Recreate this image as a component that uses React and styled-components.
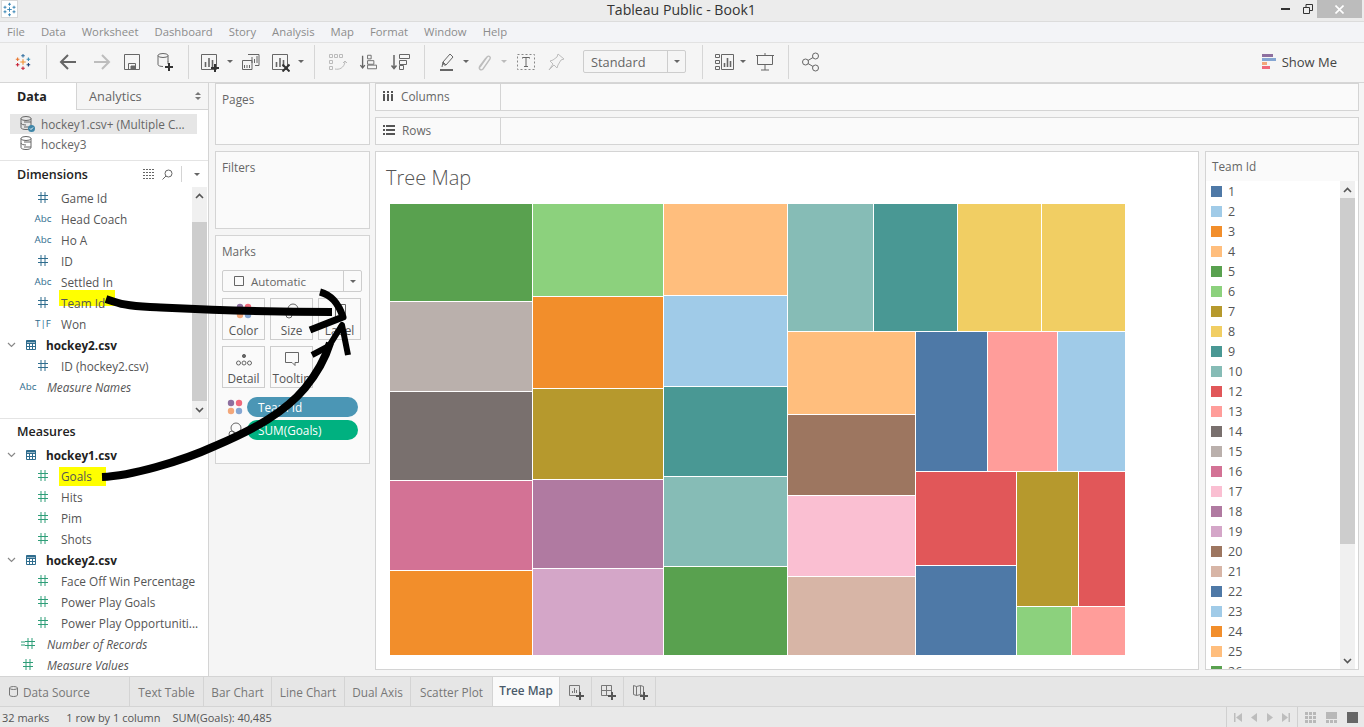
import React from "react";
import styled, { createGlobalStyle } from "styled-components";

const FONT = `"Open Sans", "Noto Sans", "Liberation Sans", sans-serif`;

const COLORS = {
  1: "#4e79a7", 2: "#a0cbe8", 3: "#f28e2b", 4: "#ffbe7d", 5: "#59a14f", 6: "#8cd17d",
  7: "#b6992d", 8: "#f1ce63", 9: "#499894", 10: "#86bcb6", 12: "#e15759", 13: "#ff9d9a",
  14: "#79706e", 15: "#bab0ac", 16: "#d37295", 17: "#fabfd2", 18: "#b07aa1", 19: "#d4a6c8",
  20: "#9d7660", 21: "#d7b5a6", 22: "#4e79a7", 23: "#a0cbe8", 24: "#f28e2b", 25: "#ffbe7d", 26: "#59a14f",
};

// x0, y0, x1, y1 (inclusive), legend key
const TREE = [
  [390, 204, 532, 301, 5], [390, 302, 532, 391, 15], [390, 392, 532, 480, 14], [390, 481, 532, 570, 16], [390, 571, 532, 655, 3],
  [533, 204, 663, 296, 6], [533, 297, 663, 388, 3], [533, 389, 663, 479, 7], [533, 480, 663, 568, 18], [533, 569, 663, 655, 19],
  [664, 204, 787, 295, 4], [664, 296, 787, 386, 2], [664, 387, 787, 476, 9], [664, 477, 787, 566, 10], [664, 567, 787, 655, 5],
  [788, 204, 873, 331, 10], [874, 204, 957, 331, 9], [958, 204, 1041, 331, 8], [1042, 204, 1125, 331, 8],
  [788, 332, 915, 414, 4], [788, 415, 915, 495, 20], [788, 496, 915, 576, 17], [788, 577, 915, 655, 21],
  [916, 332, 987, 471, 1], [988, 332, 1057, 471, 13], [1058, 332, 1125, 471, 2],
  [916, 472, 1016, 565, 12], [916, 566, 1016, 655, 1],
  [1017, 472, 1078, 606, 7], [1079, 472, 1125, 606, 12], [1017, 607, 1071, 655, 6], [1072, 607, 1125, 655, 13],
];

const LEGEND = [1, 2, 3, 4, 5, 6, 7, 8, 9, 10, 12, 13, 14, 15, 16, 17, 18, 19, 20, 21, 22, 23, 24, 25, 26];
const MENUS = ["File", "Data", "Worksheet", "Dashboard", "Story", "Analysis", "Map", "Format", "Window", "Help"];

const Global = createGlobalStyle`
  html, body { margin: 0; padding: 0; background: #f5f5f5; overflow: hidden; }
  * { box-sizing: border-box; }
`;

const Page = styled.div`
  position: relative;
  width: 1364px;
  height: 727px;
  overflow: hidden;
  display: flex;
  flex-direction: column;
  font-family: ${FONT};
  font-size: 11.8px;
  color: #555;
  background: #f5f5f5;
`;

const TitleBar = styled.div`
  position: relative;
  height: 22px;
  flex: none;
  display: flex;
  justify-content: center;
  align-items: center;
  background: #ececec;
  border-bottom: 1px solid #dcdcdc;
  font-size: 14.1px;
  color: #333;
  padding-bottom: 3px;
  padding-right: 1px;
`;
const AppIcon = styled.div`
  position: absolute;
  left: 1px;
  top: 0;
  width: 17px;
  height: 18px;
  background: #fff;
  border: 1px solid #d8d8d8;
  display: flex;
  align-items: center;
  justify-content: center;
`;
const WinControls = styled.div`
  position: absolute;
  right: 2px;
  top: 0;
  display: flex;
  height: 18px;
`;
const WinBtn = styled.div`
  width: ${(p) => p.$w}px;
  display: flex;
  align-items: center;
  justify-content: center;
  background: ${(p) => p.$bg || "transparent"};
`;

const MenuBar = styled.div`
  height: 21px;
  flex: none;
  display: flex;
  align-items: center;
  gap: 16px;
  padding: 0 0 2px 7px;
  background: #f3f4f7;
  border-bottom: 1px solid #e2e2e2;
  color: #8c8c8c;
  font-size: 11.3px;
`;

const Toolbar = styled.div`
  height: 40px;
  flex: none;
  display: flex;
  align-items: center;
  background: #f5f5f5;
  border-bottom: 1px solid #d6d6d6;
  padding: 0 27px 2px 0;
`;
const Tool = styled.div`
  flex: none;
  width: ${(p) => p.$w}px;
  margin-left: ${(p) => p.$ml || 0}px;
  display: flex;
  justify-content: center;
  align-items: center;
`;
const ToolSep = styled.div`
  flex: none;
  width: 1px;
  height: 34px;
  background: #d6d6d6;
  margin-left: ${(p) => p.$ml || 0}px;
`;
const Caret = styled.div`
  flex: none;
  width: 0;
  height: 0;
  border-left: 3px solid transparent;
  border-right: 3px solid transparent;
  border-top: 3px solid ${(p) => p.$color || "#666"};
`;
const Dropdown = styled.div`
  flex: none;
  display: flex;
  align-items: stretch;
  width: ${(p) => p.$w}px;
  height: ${(p) => p.$h}px;
  margin-left: ${(p) => p.$ml || 0}px;
  border: 1px solid #cdcdcd;
  border-radius: 2px;
  background: ${(p) => p.$bg || "#f5f5f5"};
`;
const DropLabel = styled.div`
  flex: 1;
  display: flex;
  align-items: center;
  gap: 7px;
  padding-left: ${(p) => p.$pl}px;
  color: #666;
  font-size: ${(p) => p.$fs || 12}px;
`;
const DropBtn = styled.div`
  flex: none;
  width: 18px;
  border-left: 1px solid #cdcdcd;
  display: flex;
  align-items: center;
  justify-content: center;
`;
const ShowMe = styled.div`
  margin-left: auto;
  display: flex;
  align-items: center;
  gap: 6px;
  color: #444;
  font-size: 13px;
`;

const Body = styled.div`
  height: 593px;
  flex: none;
  display: flex;
`;

const LeftPanel = styled.div`
  flex: none;
  width: 209px;
  background: #fff;
  border-right: 1px solid #d4d4d4;
  display: flex;
  flex-direction: column;
`;
const TabRow = styled.div`
  height: 27px;
  flex: none;
  display: flex;
`;
const DataTab = styled.div`
  width: 76px;
  padding-left: 17px;
  display: flex;
  align-items: center;
  font-weight: 700;
  font-size: 12.5px;
  color: #222;
`;
const AnalyticsTab = styled.div`
  flex: 1;
  display: flex;
  align-items: center;
  justify-content: space-between;
  padding: 0 7px 0 12px;
  background: #f5f5f5;
  border-left: 1px solid #d4d4d4;
  border-bottom: 1px solid #d4d4d4;
  font-size: 12.8px;
  color: #666;
`;
const Updown = styled.div`
  display: flex;
  flex-direction: column;
  gap: 2px;
`;
const CaretUp = styled(Caret)`
  border-top: 0;
  border-bottom: 3px solid #777;
`;
const Sources = styled.div`
  height: 51px;
  flex: none;
  padding-top: 4px;
  border-bottom: 1px solid #e4e4e4;
`;
const SourceRow = styled.div`
  height: 20px;
  margin: 0 11px 0 10px;
  padding-left: 8px;
  display: flex;
  align-items: center;
  gap: 5px;
  color: #666;
  background: ${(p) => (p.$active ? "#e6e6e6" : "transparent")};
`;
const SectionHead = styled.div`
  height: ${(p) => p.$h}px;
  flex: none;
  display: flex;
  align-items: center;
  padding-left: 17px;
  font-weight: 600;
  font-size: 12.5px;
  color: #222;
`;
const HeadTools = styled.div`
  margin-left: auto;
  display: flex;
  align-items: center;
  height: 16px;
  gap: 7px;
  padding-right: 8px;
`;
const HeadSep = styled.div`
  width: 1px;
  height: 16px;
  background: #d4d4d4;
  margin-left: 1px;
  margin-right: 5px;
`;
const DimArea = styled.div`
  height: 232px;
  flex: none;
  display: flex;
  border-bottom: 1px solid #e4e4e4;
`;
const DimList = styled.div`
  flex: 1;
  min-width: 0;
`;
const Scroll = styled.div`
  flex: none;
  width: 15px;
  margin-right: ${(p) => p.$mr}px;
  background: #f0f0f0;
  display: flex;
  flex-direction: column;
`;
const ScrollArrow = styled.div`
  flex: none;
  height: 17px;
  display: flex;
  align-items: center;
  justify-content: center;
`;
const ScrollTrack = styled.div`
  flex: 1;
`;
const Thumb = styled.div`
  flex: none;
  height: ${(p) => p.$h}px;
  margin-top: ${(p) => p.$mt}px;
  background: #cdcdcd;
`;
const Row = styled.div`
  height: 21px;
  flex: none;
  display: flex;
  align-items: center;
  white-space: nowrap;
  padding-left: ${(p) => (p.$italic ? 17 : 32)}px;
  gap: ${(p) => (p.$italic ? 8 : 7)}px;
  color: #555;
  font-style: ${(p) => (p.$italic ? "italic" : "normal")};
`;
const FieldIcon = styled.div`
  flex: none;
  width: 22px;
  display: flex;
  justify-content: center;
  align-items: center;
  font-style: normal;
  font-size: 9.8px;
  font-weight: 500;
  color: ${(p) => p.$color};
`;
// yellow highlighter stroke painted under the label
const Marker = styled.span`
  position: relative;
  z-index: 0;
  &::before {
    content: "";
    display: ${(p) => (p.$mark ? "block" : "none")};
    position: absolute;
    z-index: -1;
    left: -2px;
    top: ${(p) => p.$mark?.top}px;
    width: ${(p) => p.$mark?.w}px;
    height: ${(p) => p.$mark?.h}px;
    background: #ffff00;
  }
`;
const TableRow = styled.div`
  height: 21px;
  flex: none;
  display: flex;
  align-items: center;
  padding-left: 7px;
  font-weight: 700;
  color: #222;
`;
const Chevron = styled.div`
  width: 9px;
  display: flex;
`;
const TableIconWrap = styled.div`
  width: 30px;
  display: flex;
  justify-content: center;
`;

const Workspace = styled.div`
  flex: 1;
  min-width: 0;
  display: flex;
  gap: 5px;
  padding: 0 5px 6px 6px;
`;
const SideCol = styled.div`
  flex: none;
  width: 155px;
  display: flex;
  flex-direction: column;
  gap: 6px;
`;
const Card = styled.div`
  background: #fafafa;
  border: 1px solid #d4d4d4;
  height: ${(p) => p.$h}px;
  flex: none;
`;
const CardTitle = styled.div`
  padding: 7px 0 0 6px;
  color: #666;
`;
const MarkBody = styled.div`
  padding: 11px 6px 0 6px;
  display: flex;
  flex-direction: column;
`;
const MarkGrid = styled.div`
  display: grid;
  grid-template-columns: 43px 43px 43px;
  gap: 6px 5px;
  margin-top: 6px;
`;
const MarkBtn = styled.div`
  height: 42px;
  border: 1px solid #cdcdcd;
  display: flex;
  flex-direction: column;
  align-items: center;
  justify-content: flex-end;
  gap: 3px;
  padding-bottom: 1px;
  color: #555;
`;
const PillRow = styled.div`
  display: flex;
  align-items: center;
  height: 20px;
  margin-top: ${(p) => p.$mt}px;
`;
const PillIcon = styled.div`
  flex: none;
  width: 25px;
  display: flex;
  justify-content: center;
`;
const Pill = styled.div`
  width: 111px;
  height: 20px;
  border-radius: 10px;
  display: flex;
  align-items: center;
  padding-left: 11px;
  color: #fff;
  background: ${(p) => p.$bg};
`;

const MainCol = styled.div`
  flex: 1;
  min-width: 0;
  display: flex;
  flex-direction: column;
  gap: 6px;
`;
const Shelf = styled.div`
  height: 28px;
  flex: none;
  display: flex;
  background: #fafafa;
  border: 1px solid #d4d4d4;
`;
const ShelfLabel = styled.div`
  width: 125px;
  flex: none;
  display: flex;
  align-items: center;
  gap: 7px;
  padding: 0 0 2px 7px;
  border-right: 1px solid #d4d4d4;
  color: #666;
`;
const VizRow = styled.div`
  flex: 1;
  min-height: 0;
  display: flex;
  gap: 6px;
`;
const VizCard = styled.div`
  flex: 1;
  min-width: 0;
  background: #fff;
  border: 1px solid #d4d4d4;
`;
const VizTitle = styled.div`
  height: 52px;
  padding: 12px 0 0 10px;
  font-size: 20px;
  font-weight: 300;
  color: #555;
`;
const Chart = styled.svg`
  display: block;
  margin-left: 14px;
`;
const Legend = styled.div`
  flex: none;
  width: 154px;
  border: 1px solid #d4d4d4;
  background: #fafafa;
  display: flex;
  flex-direction: column;
`;
const LegendHead = styled.div`
  height: 29px;
  flex: none;
  display: flex;
  align-items: center;
  padding: 0 0 1px 6px;
  color: #666;
`;
const LegendBody = styled.div`
  flex: 1;
  min-height: 0;
  display: flex;
  background: #fff;
`;
const LegendList = styled.div`
  flex: 1;
  min-width: 0;
  overflow: hidden;
`;
const LegendItem = styled.div`
  height: 20px;
  display: flex;
  align-items: center;
  gap: 6px;
  padding-left: 5px;
  color: #555;
  font-size: 12.5px;
`;
const Swatch = styled.div`
  width: 11px;
  height: 11px;
  background: ${(p) => p.$c};
`;

const TabBar = styled.div`
  height: 31px;
  flex: none;
  display: flex;
  background: #e6e6e6;
  border-top: 1px solid #d4d4d4;
  border-bottom: 1px solid #d4d4d4;
`;
const SheetTab = styled.div`
  flex: none;
  width: ${(p) => p.$w}px;
  display: flex;
  align-items: center;
  justify-content: ${(p) => (p.$left ? "flex-start" : "center")};
  gap: 5px;
  padding-left: ${(p) => (p.$left ? 9 : 0)}px;
  padding-bottom: ${(p) => (p.$active ? 3 : 0)}px;
  background: ${(p) => (p.$active ? "#fafafa" : "transparent")};
  font-weight: ${(p) => (p.$active ? 600 : 400)};
  color: ${(p) => (p.$active ? "#4a5a6a" : "#777")};
  border-right: 1px solid #d4d4d4;
`;
const StatusBar = styled.div`
  height: 20px;
  flex: none;
  display: flex;
  align-items: center;
  background: #e9e9e9;
  color: #555;
  font-size: 11px;
  padding-left: 2px;
`;
const StatusText = styled.span`
  margin-right: ${(p) => p.$mr || 0}px;
`;
const StatusTools = styled.div`
  margin-left: auto;
  height: 100%;
  display: flex;
  align-items: stretch;
`;
const NavGroup = styled.div`
  width: ${(p) => p.$w}px;
  border-left: 1px solid #d0d0d0;
  display: flex;
  align-items: center;
  justify-content: center;
  gap: ${(p) => p.$gap}px;
`;

const Ink = styled.svg`
  position: absolute;
  left: 0;
  top: 0;
  pointer-events: none;
`;

function Icon({ size = 20, children }) {
  return (
    <svg width={size} height={size} viewBox={`0 0 ${size} ${size}`} fill="none" stroke="#666" strokeWidth="1">
      {children}
    </svg>
  );
}

const Plus = ({ x, y, c = "#333" }) => (
  <path d={`M${x - 4} ${y}h8M${x} ${y - 4}v8`} stroke={c} strokeWidth="2" />
);

function Crosses({ size, colors }) {
  const pts = [[10, 3], [4, 7], [16, 7], [10, 10], [4, 13], [16, 13], [10, 17]];
  return (
    <svg width={size} height={size} viewBox="0 0 20 20">
      {pts.map(([x, y], i) => {
        const r = i === 3 ? 3 : 2;
        return (
          <path key={i} d={`M${x - r} ${y}h${r * 2}M${x} ${y - r}v${r * 2}`} stroke={colors[i]} strokeWidth="1.2" />
        );
      })}
    </svg>
  );
}

const BarBox = ({ plus, cross }) => (
  <Icon>
    <path d="M2.5 2.5h15v15h-15z" />
    <path d="M6.5 15V10M10 15V6M13.5 15V8" strokeWidth="1.6" />
    {plus && <Plus x={16} y={16} />}
    {cross && <path d="M12.5 12.5l7 7M19.5 12.5l-7 7" stroke="#333" strokeWidth="2" />}
  </Icon>
);

const DbIcon = ({ x = 6, y = 3 }) => (
  <g>
    <ellipse cx={x + 5} cy={y + 1.5} rx="5" ry="2" />
    <path d={`M${x} ${y + 1.5}v9c0 1.2 2.2 2 5 2M${x + 10} ${y + 1.5}v6`} />
  </g>
);

const SourceIcon = ({ check }) => (
  <svg width="18" height="18" viewBox="0 0 18 18" fill="none" stroke="#666">
    <ellipse cx="8" cy="3.5" rx="5" ry="2" />
    <path d="M3 3.5v9c0 1.2 2.2 2 5 2s5-.8 5-2v-9M3 8c0 1.2 2.2 2 5 2M6 7h7M6 12h7" />
    {check && <circle cx="13.5" cy="13.5" r="3.5" fill="#3f86a8" stroke="none" />}
    {check && <path d="M12 13.5l1 1 2-2" stroke="#fff" />}
  </svg>
);

const TableIcon = () => (
  <svg width="10" height="10" viewBox="0 0 10 10" fill="none" stroke="#2f6d8e">
    <path d="M.5.5h9v9h-9zM.5 3.5h9M.5 6.5h9M3.5 3.5v6M6.5 3.5v6" />
    <path d="M.5 1.5h9" strokeWidth="2" />
  </svg>
);

const Hash = ({ c }) => (
  <svg width="10" height="11" viewBox="0 0 10 11" fill="none" stroke={c}>
    <path d="M0 3.5h10M0 7.5h10M3 0v11M7 0v11" />
  </svg>
);

const ChevronIcon = ({ up, c = "#666", w = 1.6 }) => (
  <svg width="9" height="6" viewBox="0 0 9 6" fill="none" stroke={c} strokeWidth={w}>
    <path d={up ? "M1 5l3.5-3.5L8 5" : "M1 1l3.5 3.5L8 1"} />
  </svg>
);

const DIM = "#2f6d8e";
const MEAS = "#2e9e78";

function FieldGlyph({ kind, color }) {
  if (kind === "num") return <Hash c={color} />;
  if (kind === "calc")
    return (
      <>
        <svg width="4" height="5" viewBox="0 0 4 5" stroke={color}>
          <path d="M0 1h4M0 4h4" />
        </svg>
        <Hash c={color} />
      </>
    );
  return kind;
}

function Field({ kind, label, color = DIM, italic, mark }) {
  return (
    <Row $italic={italic}>
      <FieldIcon $color={color}>
        <FieldGlyph kind={kind} color={color} />
      </FieldIcon>
      <Marker $mark={mark}>{label}</Marker>
    </Row>
  );
}

function TableHead({ label }) {
  return (
    <TableRow>
      <Chevron>
        <ChevronIcon c="#888" w={1.2} />
      </Chevron>
      <TableIconWrap>
        <TableIcon />
      </TableIconWrap>
      {label}
    </TableRow>
  );
}

function ScrollBar({ before, thumb, mr }) {
  return (
    <Scroll $mr={mr}>
      <ScrollArrow>
        <ChevronIcon up c="#555" />
      </ScrollArrow>
      <Thumb $h={thumb} $mt={before} />
      <ScrollTrack />
      <ScrollArrow>
        <ChevronIcon c="#555" />
      </ScrollArrow>
    </Scroll>
  );
}

const FourDots = () => (
  <svg width="16" height="16" viewBox="0 0 16 16">
    <circle cx="4" cy="4" r="3.2" fill="#8d6f9f" />
    <circle cx="12" cy="4" r="3.2" fill="#f0697b" />
    <circle cx="4" cy="12" r="3.2" fill="#f3a77a" />
    <circle cx="12" cy="12" r="3.2" fill="#85a6d2" />
  </svg>
);

function MainToolbar() {
  return (
    <Toolbar>
      <Tool $w={46}>
        <Crosses size={18} colors={["#2f6d9e", "#e8762d", "#3a8fb7", "#f28e2b", "#c72035", "#1f447a", "#c72035"]} />
      </Tool>
      <ToolSep />
      <Tool $w={42}>
        <Icon><path d="M18 10H3M10 3l-7 7 7 7" strokeWidth="2" /></Icon>
      </Tool>
      <Tool $w={26}>
        <Icon><path d="M2 10h15M10 3l7 7-7 7" stroke="#bdbdbd" strokeWidth="2" /></Icon>
      </Tool>
      <Tool $w={34}>
        <Icon><path d="M2.5 2.5h15v15h-15zM6.5 17.5v-6h7v6" /><path d="M9 14h4v3H9z" fill="#666" /></Icon>
      </Tool>
      <Tool $w={32}>
        <Icon>
          <DbIcon x={3} y={2} />
          <path d="M13 9v3" />
          <Plus x={14} y={15} />
        </Icon>
      </Tool>
      <ToolSep $ml={7} />
      <Tool $w={36} $ml={2}><BarBox plus /></Tool>
      <Tool $w={6}><Caret /></Tool>
      <Tool $w={34}>
        <Icon>
          <path d="M8 2.5h11v11H15M12 5v6M14.5 7v4M17 4v7" />
          <path d="M2.5 8.5H12v9H2.5zM4.5 16v-3M7 16v-3M9.5 16v-3" />
        </Icon>
      </Tool>
      <Tool $w={26}><BarBox cross /></Tool>
      <Tool $w={16}><Caret /></Tool>
      <ToolSep $ml={5} />
      <Tool $w={44}>
        <Icon>
          <g stroke="#bbb">
            <path d="M2.5 2.5h3v3h-3zM7.5 2.5h3v3h-3zM12.5 2.5h3v3h-3zM2.5 8.5h3v3h-3zM2.5 14.5h3v3h-3z" />
            <path d="M8 17c4 1 9-1 10-7M16 11l2-2 2 2" />
          </g>
        </Icon>
      </Tool>
      <Tool $w={18}>
        <Icon>
          <path d="M4 3v13M1.5 13.5L4 16.5l2.5-3" strokeWidth="1.5" />
          <path d="M9.5 2.5h4v4h-4zM9.5 8.5h7v4h-7zM9.5 13.5h10v4h-10z" />
        </Icon>
      </Tool>
      <Tool $w={46}>
        <Icon>
          <path d="M4 3v13M1.5 13.5L4 16.5l2.5-3" strokeWidth="1.5" />
          <path d="M9.5 2.5h10v4h-10zM9.5 8.5h7v4h-7zM9.5 13.5h4v4h-4z" />
        </Icon>
      </Tool>
      <ToolSep $ml={1} />
      <Tool $w={36} $ml={3}>
        <Icon>
          <path d="M8 13l-1-3 7-8 3 3-7 8zM6 15l1-5 3 3" />
          <path d="M4 18h13" strokeWidth="2" />
        </Icon>
      </Tool>
      <Tool $w={4}><Caret /></Tool>
      <Tool $w={32}>
        <Icon><path d="M6 15l7-10c2-2 4 0 3 2l-7 10c-2 2-5 0-3-3l6-8" stroke="#bdbdbd" strokeWidth="1.4" /></Icon>
      </Tool>
      <Tool $w={8}><Caret $color="#bbb" /></Tool>
      <Tool $w={36}>
        <Icon>
          <path d="M1.5 2.5h17v15h-17z" stroke="#888" strokeDasharray="2 2" />
          <path d="M6.5 6.5v-1h7v1M10 5.5v9M8 14.5h4" />
        </Icon>
      </Tool>
      <Tool $w={24}>
        <Icon><path d="M12 2l6 5-3 1-3 5-1 3-3-3-5 5 4-6-3-3 3-1 4-3z" stroke="#bdbdbd" /></Icon>
      </Tool>
      <Dropdown $w={103} $h={23} $ml={15}>
        <DropLabel $pl={7} $fs={12.8}>Standard</DropLabel>
        <DropBtn><Caret /></DropBtn>
      </Dropdown>
      <ToolSep $ml={16} />
      <Tool $w={34} $ml={4}>
        <Icon>
          <path d="M1.5 2.5h4v3h-4zM1.5 8.5h4v3h-4zM1.5 14.5h4v3h-4zM7.5 2.5h12v15h-12z" />
          <path d="M10.5 15v-4M13.5 15V6M16.5 15V9" strokeWidth="1.6" />
        </Icon>
      </Tool>
      <Tool $w={4}><Caret /></Tool>
      <Tool $w={40}>
        <Icon><path d="M1 3.5h18M2.5 3.5v9h15v-9M10 12.5V18M6 18h8M10 1v2" /></Icon>
      </Tool>
      <ToolSep $ml={3} />
      <Tool $w={44}>
        <Icon>
          <circle cx="4.5" cy="10" r="3" />
          <circle cx="14.5" cy="4" r="3" />
          <circle cx="14.5" cy="16" r="3" />
          <path d="M7 8.5l5-3M7 11.5l5 3" />
        </Icon>
      </Tool>
      <ShowMe>
        <svg width="14" height="15" viewBox="0 0 14 15">
          <rect x="0" y="0" width="11" height="3" fill="#8d6f9f" />
          <rect x="0" y="4" width="14" height="3" fill="#85a6d2" />
          <rect x="0" y="8" width="5" height="3" fill="#f3a77a" />
          <rect x="0" y="12" width="8" height="3" fill="#f0697b" />
        </svg>
        Show Me
      </ShowMe>
    </Toolbar>
  );
}

function LeftSide() {
  return (
    <LeftPanel>
      <TabRow>
        <DataTab>Data</DataTab>
        <AnalyticsTab>
          Analytics
          <Updown><CaretUp /><Caret $color="#777" /></Updown>
        </AnalyticsTab>
      </TabRow>
      <Sources>
        <SourceRow $active><SourceIcon check />hockey1.csv+ (Multiple C...</SourceRow>
        <SourceRow><SourceIcon />hockey3</SourceRow>
      </Sources>
      <SectionHead $h={26}>
        Dimensions
        <HeadTools>
          <svg width="12" height="10" viewBox="0 0 12 10" stroke="#666"><path d="M0 .5h12M0 3.5h12M0 6.5h12M0 9.5h12" strokeDasharray="2 1" /></svg>
          <svg width="11" height="11" viewBox="0 0 11 11" fill="none" stroke="#666"><circle cx="6.5" cy="4.5" r="3.5" /><path d="M4 7l-3.500 3.500" /></svg>
          <HeadSep />
          <Caret />
        </HeadTools>
      </SectionHead>
      <DimArea>
        <DimList>
          <Field kind="num" label="Game Id" />
          <Field kind="Abc" label="Head Coach" />
          <Field kind="Abc" label="Ho A" />
          <Field kind="num" label="ID" />
          <Field kind="Abc" label="Settled In" />
          <Field kind="num" label="Team Id" mark={{ top: -5, w: 56, h: 16 }} />
          <Field kind="T|F" label="Won" />
          <TableHead label="hockey2.csv" />
          <Field kind="num" label="ID (hockey2.csv)" />
          <Field kind="Abc" label="Measure Names" italic />
        </DimList>
        <ScrollBar before={18} thumb={179} mr={1} />
      </DimArea>
      <SectionHead $h={25}>Measures</SectionHead>
      <TableHead label="hockey1.csv" />
      <Field kind="num" label="Goals" color={MEAS} mark={{ top: -1, w: 47, h: 19 }} />
      <Field kind="num" label="Hits" color={MEAS} />
      <Field kind="num" label="Pim" color={MEAS} />
      <Field kind="num" label="Shots" color={MEAS} />
      <TableHead label="hockey2.csv" />
      <Field kind="num" label="Face Off Win Percentage" color={MEAS} />
      <Field kind="num" label="Power Play Goals" color={MEAS} />
      <Field kind="num" label="Power Play Opportuniti..." color={MEAS} />
      <Field kind="calc" label="Number of Records" color={MEAS} italic />
      <Field kind="num" label="Measure Values" color={MEAS} italic />
    </LeftPanel>
  );
}

function MarksCard() {
  return (
    <Card $h={229}>
      <CardTitle>Marks</CardTitle>
      <MarkBody>
        <Dropdown $w={140} $h={22} $bg="#fafafa">
          <DropLabel $pl={11} $fs={11.5}>
            <svg width="10" height="10" viewBox="0 0 10 10" fill="none" stroke="#666"><path d="M.5.5h9v9h-9z" /></svg>
            Automatic
          </DropLabel>
          <DropBtn><Caret /></DropBtn>
        </Dropdown>
        <MarkGrid>
          <MarkBtn><FourDots />Color</MarkBtn>
          <MarkBtn>
            <svg width="16" height="16" viewBox="0 0 16 16" fill="none" stroke="#666"><circle cx="9" cy="6" r="5" /><circle cx="5" cy="12" r="3" /></svg>
            Size
          </MarkBtn>
          <MarkBtn>
            <svg width="16" height="16" viewBox="0 0 16 16" fill="none" stroke="#666"><path d="M3.5 1.5h10v13h-10z" /></svg>
            Label
          </MarkBtn>
          <MarkBtn>
            <svg width="16" height="14" viewBox="0 0 16 14" fill="none" stroke="#666">
              <circle cx="8" cy="3" r="1.6" fill="#666" />
              <circle cx="2.5" cy="10" r="2" /><circle cx="8" cy="10" r="2" /><circle cx="13.5" cy="10" r="2" />
            </svg>
            Detail
          </MarkBtn>
          <MarkBtn>
            <svg width="16" height="16" viewBox="0 0 16 16" fill="none" stroke="#666"><path d="M1.5 1.5h13v10H11v3l-3-3H1.5z" /></svg>
            Tooltip
          </MarkBtn>
        </MarkGrid>
        <PillRow $mt={9}>
          <PillIcon><FourDots /></PillIcon>
          <Pill $bg="#4b96b5">Team Id</Pill>
        </PillRow>
        <PillRow $mt={3}>
          <PillIcon>
            <svg width="16" height="16" viewBox="0 0 16 16" fill="none" stroke="#666"><circle cx="9" cy="6" r="5" /><circle cx="5" cy="12" r="3" /></svg>
          </PillIcon>
          <Pill $bg="#00b180">SUM(Goals)</Pill>
        </PillRow>
      </MarkBody>
    </Card>
  );
}

function TreeMap() {
  return (
    <Chart width="736" height="452" viewBox="390 204 736 452">
      {TREE.map(([x0, y0, x1, y1, key], i) => (
        <rect key={i} x={x0} y={y0} width={x1 - x0} height={y1 - y0} fill={COLORS[key]} />
      ))}
    </Chart>
  );
}

export default function App() {
  return (
    <Page>
      <Global />
      <TitleBar>
        <AppIcon>
          <Crosses size={15} colors={Array(7).fill("#2f7fb0")} />
        </AppIcon>
        Tableau Public - Book1
        <WinControls>
          <WinBtn $w={26}><svg width="9" height="2"><rect width="9" height="2" fill="#333" /></svg></WinBtn>
          <WinBtn $w={19}>
            <svg width="10" height="10" viewBox="0 0 10 10" fill="none" stroke="#333"><path d="M.5 3.5h6v6h-6zM3 3V.5h6.5v6H7" /></svg>
          </WinBtn>
          <WinBtn $w={45} $bg="#bcbcbc">
            <svg width="9" height="9" viewBox="0 0 9 9" stroke="#fff" strokeWidth="1.6"><path d="M.5.5l8 8M8.5.5l-8 8" /></svg>
          </WinBtn>
        </WinControls>
      </TitleBar>
      <MenuBar>
        {MENUS.map((m) => <span key={m}>{m}</span>)}
      </MenuBar>
      <MainToolbar />
      <Body>
        <LeftSide />
        <Workspace>
          <SideCol>
            <Card $h={62}><CardTitle>Pages</CardTitle></Card>
            <Card $h={78}><CardTitle>Filters</CardTitle></Card>
            <MarksCard />
          </SideCol>
          <MainCol>
            <Shelf>
              <ShelfLabel>
                <svg width="11" height="10" viewBox="0 0 11 10" fill="#555"><rect x="0" y="3" width="2" height="7" /><rect x="4" y="3" width="2" height="7" /><rect x="8" y="3" width="2" height="7" /><rect x="0" y="0" width="2" height="2" /><rect x="4" y="0" width="2" height="2" /><rect x="8" y="0" width="2" height="2" /></svg>
                Columns
              </ShelfLabel>
            </Shelf>
            <Shelf>
              <ShelfLabel>
                <svg width="12" height="10" viewBox="0 0 12 10" fill="#555"><rect x="0" y="0" width="2" height="2" /><rect x="3" y="0" width="9" height="2" /><rect x="0" y="4" width="2" height="2" /><rect x="3" y="4" width="9" height="2" /><rect x="0" y="8" width="2" height="2" /><rect x="3" y="8" width="9" height="2" /></svg>
                Rows
              </ShelfLabel>
            </Shelf>
            <VizRow>
              <VizCard>
                <VizTitle>Tree Map</VizTitle>
                <TreeMap />
              </VizCard>
              <Legend>
                <LegendHead>Team Id</LegendHead>
                <LegendBody>
                  <LegendList>
                    {LEGEND.map((k) => (
                      <LegendItem key={k}>
                        <Swatch $c={COLORS[k]} />
                        {k}
                      </LegendItem>
                    ))}
                  </LegendList>
                  <ScrollBar before={0} thumb={346} mr={3} />
                </LegendBody>
              </Legend>
            </VizRow>
          </MainCol>
        </Workspace>
      </Body>
      <TabBar>
        <SheetTab $w={130} $left>
          <svg width="9" height="11" viewBox="0 0 9 11" fill="none" stroke="#777"><ellipse cx="4.5" cy="2" rx="4" ry="1.5" /><path d="M.5 2v7c0 .8 1.8 1.5 4 1.5s4-.7 4-1.5V2" /></svg>
          Data Source
        </SheetTab>
        <SheetTab $w={74}>Text Table</SheetTab>
        <SheetTab $w={68}>Bar Chart</SheetTab>
        <SheetTab $w={73}>Line Chart</SheetTab>
        <SheetTab $w={66}>Dual Axis</SheetTab>
        <SheetTab $w={82}>Scatter Plot</SheetTab>
        <SheetTab $w={67} $active>Tree Map</SheetTab>
        <SheetTab $w={32}>
          <svg width="16" height="16" viewBox="0 0 16 16" fill="none" stroke="#777"><path d="M1.5 1.5h10v10h-10zM4.5 9V7M6.5 9V4M8.5 9V6" /><Plus x={12} y={12} c="#555" /></svg>
        </SheetTab>
        <SheetTab $w={32}>
          <svg width="16" height="16" viewBox="0 0 16 16" fill="none" stroke="#777"><path d="M1.5 1.5h10v10h-10zM6.5 1.5v10M1.5 6.5h10" /><Plus x={12} y={12} c="#555" /></svg>
        </SheetTab>
        <SheetTab $w={32}>
          <svg width="16" height="16" viewBox="0 0 16 16" fill="none" stroke="#777"><path d="M1.5 1.5l3 1 4-1 3 1v9l-3-1-4 1-3-1zM4.5 2.5v9M8.5 1.5v9" /><Plus x={12} y={12} c="#555" /></svg>
        </SheetTab>
      </TabBar>
      <StatusBar>
        <StatusText $mr={17}>32 marks</StatusText>
        <StatusText $mr={12}>1 row by 1 column</StatusText>
        <StatusText>SUM(Goals): 40,485</StatusText>
        <StatusTools>
          <NavGroup $w={71} $gap={8}>
            <svg width="8" height="9" viewBox="0 0 8 9" fill="#bdbdbd"><rect width="1.5" height="9" /><path d="M8 0v9L2 4.5z" /></svg>
            <svg width="8" height="9" viewBox="0 0 8 9" fill="#bdbdbd"><path d="M7 0v9L1 4.5z" /></svg>
            <svg width="8" height="9" viewBox="0 0 8 9" fill="#bdbdbd"><path d="M1 0v9l6-4.5z" /></svg>
            <svg width="8" height="9" viewBox="0 0 8 9" fill="#bdbdbd"><rect x="6.5" width="1.5" height="9" /><path d="M0 0v9l6-4.5z" /></svg>
          </NavGroup>
          <NavGroup $w={67} $gap={10}>
            <svg width="11" height="11" viewBox="0 0 11 11" fill="#b8b8b8">
              {[0, 4, 8].map((y) => [0, 4, 8].map((x) => <rect key={`${x}-${y}`} x={x} y={y} width="3" height="3" />))}
            </svg>
            <svg width="11" height="11" viewBox="0 0 11 11" fill="#b8b8b8">
              <rect width="11" height="7" /><rect y="8" width="3" height="3" /><rect x="4" y="8" width="3" height="3" /><rect x="8" y="8" width="3" height="3" />
            </svg>
            <svg width="11" height="11" viewBox="0 0 11 11"><rect width="11" height="11" fill="#666" /></svg>
          </NavGroup>
        </StatusTools>
      </StatusBar>
      <Ink width="1364" height="727" viewBox="0 0 1364 727" fill="none" stroke="#000" strokeLinejoin="round">
        <path d="M106 299C118 303 125 306 150 307S240 312 332 312" strokeWidth="8" />
        <path d="M320 292C331 295 338 302 343 317L310 330" strokeWidth="7" />
        <path d="M102 477C130 476 180 462 215 446C255 429 285 412 305 388C318 372 326 356 330 343" strokeWidth="8" />
        <path d="M312 355L329 346L342 325L348 355" strokeWidth="6" />
      </Ink>
    </Page>
  );
}
